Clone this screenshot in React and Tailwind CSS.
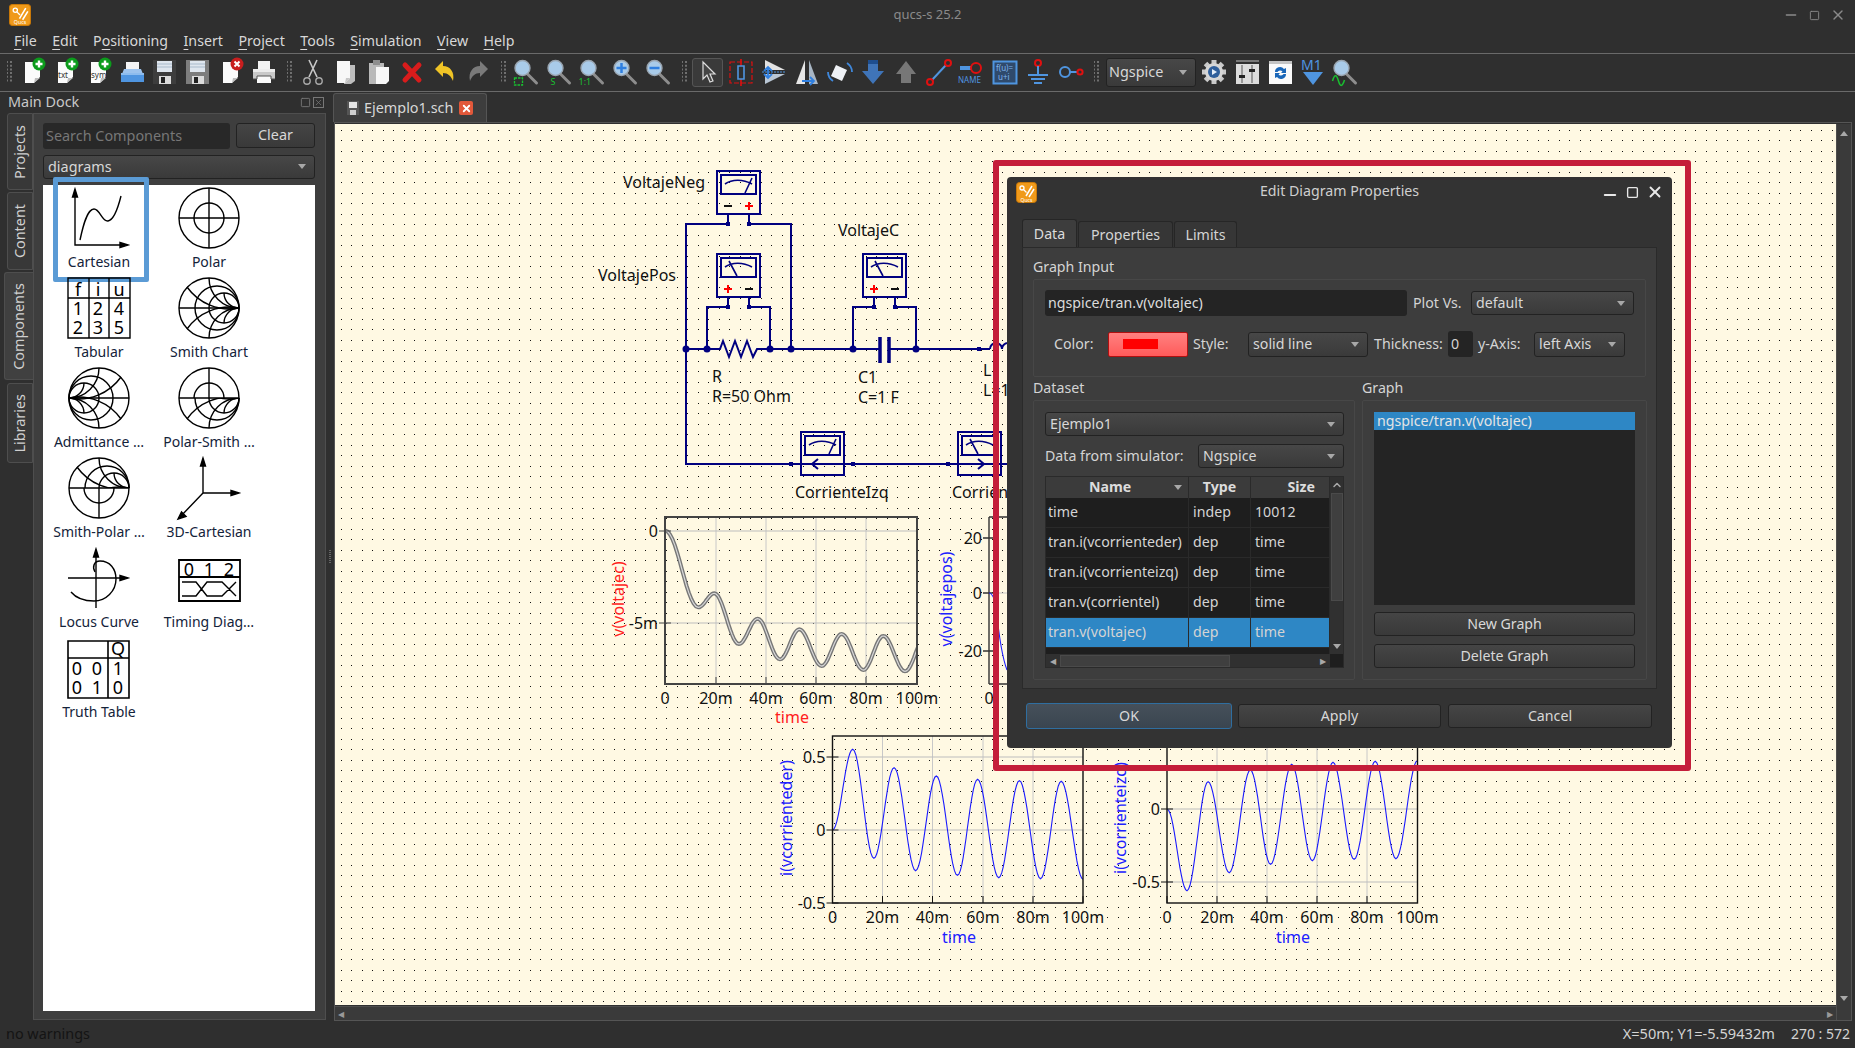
import React from 'react';
import { Minus, Square, X, ChevronUp } from 'lucide-react';

const ink = '#000080';
const sans = "'Noto Sans', 'Open Sans', sans-serif";

// smooth line through a list of peaks and troughs
const wave = (pts) => {
  let d = `M${pts[0][0]} ${pts[0][1]}`;
  for (let i = 1; i < pts.length; i++) {
    const [x0, y0] = pts[i - 1];
    const [x1, y1] = pts[i];
    for (let s = 1; s <= 14; s++) {
      const t = s / 14;
      const k = (1 - Math.cos(Math.PI * t)) / 2;
      d += `L${(x0 + (x1 - x0) * t).toFixed(1)} ${(y0 + (y1 - y0) * k).toFixed(1)}`;
    }
  }
  return d;
};

// canvas dots land on whole pixels, every 10.5px
let dotPath = '';
for (let i = 0; i < 144; i++) {
  for (let j = 0; j < 85; j++) {
    dotPath += `M${Math.floor(341 + i * 10.5)} ${Math.floor(130 + j * 10.5)}h1v1h-1z`;
  }
}

/* ---------- toolbar icons ---------- */
const Ico = ({ children }) => (
  <svg width="30" height="30" viewBox="0 0 30 30" overflow="visible">{children}</svg>
);

const Page = ({ x = 0 }) => (
  <g transform={`translate(${x} 0)`}>
    <path d="M7 5h15v15l-6 6H7z" fill="#fbfbfb" />
    <path d="M16 26l1-5h5z" fill="#bdbdbd" />
  </g>
);

const Badge = ({ red }) => (
  <g>
    <circle cx="21" cy="7" r="6.5" fill={red ? '#c81e1e' : '#0c9c1c'} />
    {red ? (
      <path d="M18.5 4.5l5 5m0-5l-5 5" stroke="#fff" strokeWidth="2" />
    ) : (
      <path d="M21 3.5v7M17.500 7h7" stroke="#fff" strokeWidth="2.4" />
    )}
  </g>
);

const NewIcon = ({ label }) => (
  <Ico>
    <Page />
    {label && (
      <text x="7" y="21" fontSize="8" fill="#333" fontFamily={sans}>{label}</text>
    )}
    <Badge />
  </Ico>
);

const CloseIcon = () => (
  <Ico>
    <Page />
    <Badge red />
  </Ico>
);

const OpenIcon = () => (
  <Ico>
    <path d="M9 5h13v10H9z" fill="#f4f4f4" />
    <path d="M7 12h17l2 5H5z" fill="#9cc3ee" />
    <path d="M4 16h23v9H4z" fill="#4f95e0" />
    <path d="M4 16h23v2H4z" fill="#8dbcee" />
  </Ico>
);

const SaveIcon = ({ light }) => (
  <Ico>
    <path d="M3 3h23v24H3z" fill={light ? '#7d7d7d' : '#3d3d3d'} />
    <path d="M7 4h15v11H7z" fill="#dfe6ee" />
    <path d="M7 7h15M7 10h15" stroke="#a9bacb" strokeWidth="1" />
    <path d="M9 19h12v8H9z" fill="#dcdcdc" />
    <path d="M11 20h4v6h-4z" fill="#222" />
  </Ico>
);

const PrintIcon = () => (
  <Ico>
    <path d="M9 4h12v8H9z" fill="#f2f2f2" />
    <path d="M4 12h22v10H4z" fill="#c9c9c9" />
    <path d="M4 12h22v3H4z" fill="#ececec" />
    <path d="M8 19h14v7H8z" fill="#fafafa" />
    <path d="M4 22h4v-3h14v3h4" fill="none" stroke="#555" strokeWidth="1" />
  </Ico>
);

const CutIcon = () => (
  <Ico>
    <path d="M11 3l8 17M19 3l-8 17" stroke="#c8c8c8" strokeWidth="1.6" />
    <circle cx="9" cy="24" r="3.2" fill="none" stroke="#aaa" strokeWidth="1.4" />
    <circle cx="21" cy="24" r="3.2" fill="none" stroke="#aaa" strokeWidth="1.4" />
  </Ico>
);

const CopyIcon = () => (
  <Ico>
    <path d="M13 8h11v16l-4 3h-7z" fill="#bdbdbd" />
    <path d="M6 4h13v17l-5 5H6z" fill="#f7f7f7" />
    <path d="M14 26l1-5h4z" fill="#c7c7c7" />
  </Ico>
);

const PasteIcon = () => (
  <Ico>
    <path d="M5 6h15v21H5z" fill="#b9b9b9" />
    <path d="M9 3h7v5H9z" fill="#8e8e8e" />
    <path d="M12 10h13v14l-3 3H12z" fill="#f7f7f7" />
  </Ico>
);

const DeleteIcon = () => (
  <Ico>
    <path d="M8 8l14 15M22 8L8 23" stroke="#d81c1c" strokeWidth="5" strokeLinecap="round" />
  </Ico>
);

const UndoIcon = ({ redo }) => (
  <Ico>
    <g transform={redo ? 'matrix(-1 0 0 1 30 0)' : undefined}>
      <path
        d="M5 12l8-8v5c7 0 12 6 10 15-2-5-5-8-10-8v4z"
        fill={redo ? '#7a7a7a' : '#f0c426'}
      />
    </g>
  </Ico>
);

const Lens = ({ children }) => (
  <Ico>
    <g transform="translate(-1.500 0)">
      <path d="M17 17l9 9" stroke="#8d8d8d" strokeWidth="3" strokeLinecap="round" />
      <circle cx="12" cy="11" r="7.5" fill="#a9cbe9" stroke="#9aa5b0" strokeWidth="1.4" />
      {children}
    </g>
  </Ico>
);

const SelectIcon = () => (
  <Ico>
    <path d="M10 5v17l4-4 3 7 3-1-3-7h5z" fill="#444" stroke="#ddd" strokeWidth="1.2" />
  </Ico>
);

const ActiveIcon = () => (
  <Ico>
    <path d="M4 5h22v21H4z" fill="none" stroke="#e01010" strokeWidth="1.2" strokeDasharray="5 2" />
    <path d="M15 2v7M15 22v7" stroke="#e01010" strokeWidth="1.6" />
    <path d="M12 9h6v13h-6z" fill="none" stroke="#4f95e0" strokeWidth="1.6" />
  </Ico>
);

const MirrorXIcon = () => (
  <Ico>
    <path d="M6 3l20 10H6z" fill="#e2e2e2" />
    <path d="M6 17h20L6 27z" fill="#b9c6d4" />
    <path d="M3 15h24" stroke="#4f95e0" strokeWidth="1" strokeDasharray="2 1" />
    <path d="M9 10v11M5 14l4-4 4 4M5 17l4 4 4-4" fill="none" stroke="#2f7fe0" strokeWidth="1.8" />
  </Ico>
);

const MirrorYIcon = () => (
  <Ico>
    <path d="M13 3v24H4z" fill="#e6e6e6" />
    <path d="M17 3v24h9z" fill="#a8b6c4" />
    <path d="M10 24h12" stroke="#2f7fe0" strokeWidth="2" />
    <path d="M18 20l4 4-4 4" fill="none" stroke="#2f7fe0" strokeWidth="1.8" />
  </Ico>
);

const RotateIcon = () => (
  <Ico>
    <path d="M11 8l11 5-5 11-11-5z" fill="#eef1f5" />
    <path d="M3 15c0 4 2 7 5 9M27 15c0-4-2-7-5-9" fill="none" stroke="#3f88dc" strokeWidth="1.8" />
  </Ico>
);

const BigArrow = ({ up }) => (
  <Ico>
    {up ? (
      <path d="M15 4l10 13h-5v9h-10v-9H5z" fill="#777" />
    ) : (
      <g>
        <path d="M10 3h10v11h6L15 27 4 14h6z" fill="#3f74b8" />
        <path d="M10 3h10v4H10z" fill="#1e4e8f" />
      </g>
    )}
  </Ico>
);

const WireIcon = () => (
  <Ico>
    <path d="M8 23L22 8" stroke="#4f95e0" strokeWidth="2" />
    <circle cx="6" cy="25" r="3" fill="none" stroke="#e01010" strokeWidth="2" />
    <circle cx="24" cy="6" r="3" fill="none" stroke="#e01010" strokeWidth="2" />
  </Ico>
);

const NameIcon = () => (
  <Ico>
    <path d="M3 9h12v4H3z" fill="#4f95e0" />
    <circle cx="19" cy="11" r="5" fill="none" stroke="#e01010" strokeWidth="2" />
    <text x="1" y="26" fontSize="8" fill="#4f95e0" fontFamily={sans}>NAME</text>
  </Ico>
);

const EqnIcon = () => (
  <Ico>
    <path d="M3.500 4.500h23v22h-23z" fill="#2f4a6c" stroke="#4f95e0" strokeWidth="2" />
    <text x="6" y="14" fontSize="8" fill="#7fb4ee" fontFamily={sans}>f(u)=</text>
    <text x="8" y="23" fontSize="8" fill="#7fb4ee" fontFamily={sans}>u+i</text>
  </Ico>
);

const GroundIcon = () => (
  <Ico>
    <circle cx="15" cy="6" r="3" fill="none" stroke="#e01010" strokeWidth="2" />
    <path d="M15 9v9M5 18h20M8 22h14M11 26h8" stroke="#4f95e0" strokeWidth="2" />
  </Ico>
);

const PortIcon = () => (
  <Ico>
    <circle cx="9" cy="15" r="5" fill="none" stroke="#4f95e0" strokeWidth="2" />
    <path d="M14 15h8" stroke="#4f95e0" strokeWidth="2" />
    <circle cx="24" cy="15" r="2.600" fill="none" stroke="#e01010" strokeWidth="2" />
  </Ico>
);

const GearIcon = () => (
  <Ico>
    <path d="M15 3v24M3 15h24M6.500 6.500l17 17M23.500 6.500l-17 17" stroke="#c9c9c9" strokeWidth="5" />
    <circle cx="15" cy="15" r="9" fill="#d6d6d6" />
    <circle cx="15" cy="15" r="6" fill="#2f5f9c" />
    <path d="M13 12l5 3-5 3z" fill="#e4eefa" />
  </Ico>
);

const SlidersIcon = () => (
  <Ico>
    <path d="M4 3h23v2H4z" fill="#777" />
    <path d="M4 7h23v20H4z" fill="#dcdcdc" />
    <path d="M10 8v18M20 8v18" stroke="#555" strokeWidth="1" />
    <path d="M7 18h6v3H7zM17 12h6v3h-6z" fill="#222" />
  </Ico>
);

const RefreshIcon = () => (
  <Ico>
    <path d="M4 4h23v23H4z" fill="#fafafa" />
    <path d="M4 4h23v3H4z" fill="#c4c4c4" />
    <path d="M10 15a5 5 0 0 1 9-3l2-1v5h-5l1.500-1.500a3 3 0 0 0-5 .5zM21 17a5 5 0 0 1-9 3l-2 1v-5h5l-1.500 1.500a3 3 0 0 0 5-.5z" fill="#1966b8" />
  </Ico>
);

const MarkerIcon = () => (
  <Ico>
    <text x="3" y="13" fontSize="14" fill="#4f95e0" fontFamily={sans}>M1</text>
    <path d="M5 15h20l-10 13z" fill="#4f95e0" />
  </Ico>
);

const SimZoomIcon = () => (
  <Lens>
    <path d="M3 24c2-7 4-7 6 0s4 5 6-1" fill="none" stroke="#19c030" strokeWidth="1.5" />
  </Lens>
);

const Grip = () => (
  <div className="w-[16px] flex justify-end pr-[3px]">
    <svg width="6" height="22" viewBox="0 0 6 22">
      <path d="M0 0v22M4 0v22" stroke="#707070" strokeWidth="2" strokeDasharray="2 1.700" />
    </svg>
  </div>
);

const ToolBtn = ({ children }) => (
  <div className="w-[33px] h-[30px] flex items-center justify-center shrink-0">{children}</div>
);

/* ---------- small widgets ---------- */
const Arrow = () => (
  <span className="w-0 h-0 border-l-[4px] border-r-[4px] border-t-[5px] border-l-transparent border-r-transparent border-t-[#a8a8a8]" />
);

const Combo = ({ value, className }) => (
  <div className={`flex items-center justify-between pl-[4px] pr-[8px] border border-[#222] rounded-[3px] bg-gradient-to-b from-[#474747] to-[#3a3a3a] text-[#d8d8d8] ${className}`}>
    <span>{value}</span>
    <Arrow />
  </div>
);

const Btn = ({ label, className }) => (
  <div className={`flex items-center justify-center border border-[#222] rounded-[3px] bg-gradient-to-b from-[#454545] to-[#393939] text-[#d8d8d8] ${className}`}>
    {label}
  </div>
);

const TabV = ({ label, className }) => (
  <div className={`flex items-center justify-center border border-[#4e4e4e] rounded-l-[3px] text-[#cfcfcf] ${className}`}>
    <span className="[writing-mode:vertical-rl] rotate-180">{label}</span>
  </div>
);

/* ---------- diagram icons of the dock ---------- */
const Dia = ({ children }) => (
  <svg width="66" height="66" viewBox="0 0 66 66" fill="none" stroke="#000" strokeWidth="1.4" overflow="visible">
    {children}
  </svg>
);

// constant resistance circles plus reactance arcs, all meeting at the right edge
const smithArcs = (
  <g>
    <path d="M63 33A30 30 0 0 1 33 3M63 33A30 30 0 0 0 33 63" />
    <path d="M63 33A52 52 0 0 1 11 12M63 33A52 52 0 0 0 11 54" />
    <circle cx="41" cy="33" r="22" />
    <circle cx="48" cy="33" r="15" />
    <path d="M63 33A15 15 0 0 1 48 18M63 33A15 15 0 0 0 48 48" />
  </g>
);

const Cartesian = () => (
  <Dia>
    <path d="M9 8v52h48" />
    <path d="M9 4l-2.500 8h5zM62 60l-8-2.500v5z" fill="#000" />
    <path d="M14 55c3-14 7-31 14-31 6 0 8 13 14 12 6-1 10-13 13-25" />
  </Dia>
);

const Polar = () => (
  <Dia>
    <circle cx="33" cy="33" r="30" />
    <circle cx="33" cy="33" r="15" />
    <path d="M3 33h60M33 3v60" />
  </Dia>
);

const Tabular = () => (
  <Dia>
    <path d="M2 3h62v60H2zM2 23h62M23 3v60M43 3v60" />
    <g fill="#000" stroke="none" fontSize="18" fontFamily={sans} textAnchor="middle">
      <text x="12" y="21">f</text><text x="32" y="21">i</text><text x="53" y="21">u</text>
      <text x="12" y="39.500">1</text><text x="32" y="39.500">2</text><text x="53" y="39.500">4</text>
      <text x="12" y="58.500">2</text><text x="32" y="58.500">3</text><text x="53" y="58.500">5</text>
    </g>
  </Dia>
);

const Smith = () => (
  <Dia>
    <circle cx="33" cy="33" r="30" />
    <path d="M3 33h60" />
    {smithArcs}
  </Dia>
);

const Admittance = () => (
  <Dia>
    <circle cx="33" cy="33" r="30" />
    <path d="M3 33h60" />
    <g transform="matrix(-1 0 0 1 66 0)">{smithArcs}</g>
  </Dia>
);

const halfTop = 'M0 0h66v33H0z';
const halfBottom = 'M0 33h66v33H0z';

const PolarSmith = () => (
  <Dia>
    <defs>
      <clipPath id="ps1"><path d={halfTop} /></clipPath>
      <clipPath id="ps2"><path d={halfBottom} /></clipPath>
    </defs>
    <circle cx="33" cy="33" r="30" />
    <path d="M3 33h60" />
    <g clipPath="url(#ps1)"><circle cx="33" cy="33" r="15" /><path d="M33 3v30" /></g>
    <g clipPath="url(#ps2)">{smithArcs}</g>
  </Dia>
);

const SmithPolar = () => (
  <Dia>
    <defs>
      <clipPath id="sp1"><path d={halfTop} /></clipPath>
      <clipPath id="sp2"><path d={halfBottom} /></clipPath>
    </defs>
    <circle cx="33" cy="33" r="30" />
    <path d="M3 33h60" />
    <g clipPath="url(#sp1)">{smithArcs}</g>
    <g clipPath="url(#sp2)"><circle cx="33" cy="33" r="15" /><path d="M33 33v30" /></g>
  </Dia>
);

const Cart3D = () => (
  <Dia>
    <path d="M27 38V7M27 38h32M27 38L5 61" />
    <path d="M27 3l-2.500 8h5zM63 38l-8-2.500v5zM2 64l8-2.500-4.500-4.500z" fill="#000" />
  </Dia>
);

const Locus = () => (
  <Dia>
    <path d="M2 33h56M30 8v55" />
    <path d="M30 4l-2.500 8h5zM62 33l-8-2.500v5z" fill="#000" />
    <path d="M29 27C26 22 28 16 34 16C44 16 50 24 50 34C50 46 40 56 28 56C18 56 10 53 5 47" />
  </Dia>
);

const Timing = () => (
  <Dia>
    <path d="M3 15h61v41H3zM3 32h61" strokeWidth="1.800" />
    <path d="M6 37H20L31 51H46L60 37M6 51H20L31 37H46L60 51" />
    <g fill="#000" stroke="none" fontSize="18" fontFamily={sans} textAnchor="middle">
      <text x="13" y="31">0</text><text x="33" y="31">1</text><text x="53" y="31">2</text>
    </g>
  </Dia>
);

const Truth = () => (
  <Dia>
    <path d="M2 6h61v57H2zM2 23h61M42 6v57" strokeWidth="1.600" />
    <g fill="#000" stroke="none" fontSize="18" fontFamily={sans} textAnchor="middle">
      <text x="52" y="20">Q</text>
      <text x="11" y="39.500">0</text><text x="31" y="39.500">0</text><text x="52" y="39.500">1</text>
      <text x="11" y="58.500">0</text><text x="31" y="58.500">1</text><text x="52" y="58.500">0</text>
    </g>
  </Dia>
);

const diagrams = [
  ['Cartesian', Cartesian],
  ['Polar', Polar],
  ['Tabular', Tabular],
  ['Smith Chart', Smith],
  ['Admittance …', Admittance],
  ['Polar-Smith …', PolarSmith],
  ['Smith-Polar …', SmithPolar],
  ['3D-Cartesian', Cart3D],
  ['Locus Curve', Locus],
  ['Timing Diag…', Timing],
  ['Truth Table', Truth],
];

/* ---------- schematic ---------- */
const Meter = ({ x, y, flip }) => (
  <g stroke={ink} fill="none">
    <rect x={x} y={y} width="43" height="43" strokeWidth="2" />
    <rect x={x + 4} y={y + 4} width="35" height="19" strokeWidth="2" />
    {flip ? (
      <path d={`M${x + 8} ${y + 13}c7-5 18-5 27 0M${x + 28} ${y + 22}l7-15`} strokeWidth="1.6" />
    ) : (
      <path d={`M${x + 8} ${y + 13}c7-5 18-5 27 0M${x + 20} ${y + 22}l-8-15`} strokeWidth="1.6" />
    )}
  </g>
);

const Pm = ({ x, y, plus }) => (
  <path
    d={plus ? `M${x - 4} ${y}h8M${x} ${y - 4}v8` : `M${x - 4} ${y}h8`}
    stroke={plus ? '#ff0000' : '#111'}
    strokeWidth="2"
  />
);

const Node = ({ x, y }) => <circle cx={x} cy={y} r="3.500" fill={ink} />;
const Port = ({ x, y }) => <rect x={x - 2} y={y - 2} width="4" height="4" fill={ink} />;

const Txt = ({ x, y, children, fill = '#111', anchor = 'start', rotate }) => (
  <text
    x={x}
    y={y}
    fill={fill}
    fontSize="16"
    fontFamily={sans}
    textAnchor={anchor}
    dominantBaseline="central"
    transform={rotate ? `rotate(-90 ${x} ${y})` : undefined}
  >
    {children}
  </text>
);

const Chart = ({ id, l, r, t, b, xs, ys, line, lineProps, frame = '#111', frameW = 1.400, yLabel, yLabelX, yLabelY, labelColor, xTitleX, xTitleY }) => {
  const names = ['0', '20m', '40m', '60m', '80m', '100m'];
  const ticks = [l, ...xs, r];
  return (
    <g>
      <defs>
        <clipPath id={id}><rect x={l} y={t} width={r - l} height={b - t} /></clipPath>
      </defs>
      {xs.map((x) => <path key={x} d={`M${x} ${t}V${b}`} stroke="#c8c8c8" strokeWidth="1" />)}
      {ys.map((y) => <path key={y[0]} d={`M${l} ${y[0]}H${r}`} stroke="#bdbdbd" strokeWidth="1" />)}
      <g clipPath={`url(#${id})`}>
        {lineProps.map((p, i) => <path key={i} d={line} fill="none" {...p} />)}
      </g>
      <rect x={l} y={t} width={r - l} height={b - t} fill="none" stroke={frame} strokeWidth={frameW} />
      {ticks.map((x) => <path key={x} d={`M${x} ${b - 7}V${b}`} stroke={frame} strokeWidth="1" />)}
      {ys.map((y) => <path key={y[0]} d={`M${l - 6} ${y[0]}h12`} stroke={frame} strokeWidth="1" />)}
      {ys.map((y) => <Txt key={y[0]} x={l - 7} y={y[0]} anchor="end">{y[1]}</Txt>)}
      {ticks.map((x, i) => <Txt key={x} x={x} y={b + 14} anchor="middle">{names[i]}</Txt>)}
      <Txt x={xTitleX} y={xTitleY} fill={labelColor} anchor="middle">time</Txt>
      <Txt x={yLabelX} y={yLabelY} fill={labelColor} anchor="middle" rotate>{yLabel}</Txt>
    </g>
  );
};

// peaks and troughs read off the screenshot
const z6 = (pts) => pts.map(([x, y]) => [590 + x / 3, 500 + y / 3]);
const z9 = (pts) => pts.map(([x, y]) => [760 + x / 2.178, 730 + y / 3]);

const lineV = wave(z6([[226, 92], [325, 322], [373, 280], [447, 432], [503, 356], [570, 478], [628, 388], [695, 498], [755, 402], [820, 510], [880, 408], [945, 514], [1007, 410]]));
const lineR = wave(z9([[158, 300], [202, 58], [248, 385], [292, 113], [339, 422], [384, 138], [430, 436], [474, 148], [520, 443], [565, 152], [611, 446], [656, 154], [704, 448]]));
const lineL = wave(z9([[887, 238], [930, 482], [976, 155], [1022, 428], [1068, 120], [1112, 403], [1158, 103], [1203, 392], [1248, 97], [1294, 388], [1340, 94], [1385, 386], [1432, 92]]));

const Schematic = () => (
  <svg className="absolute inset-0 w-full h-full" viewBox="335 124 1501 881">
    <path d={dotPath} fill="#111" shapeRendering="crispEdges" />

    {/* wires */}
    <g fill="none" stroke={ink} strokeWidth="2">
      <path d="M728 213v11H686V464H790M749 213v11h42V349" />
      <path d="M728 297v10H707V349M749 297v10h21V349" />
      <path d="M874 297v10H853V349M895 297v10h21V349" />
      <path d="M686 349H720l3-8 6 16 6-16 6 16 6-16 6 16 4-8H880M889 349H990" />
      <path d="M990 349a6 6 0 0 1 12 0a6 6 0 0 1 12 0" />
      <path d="M790 464H1010" />
      <path d="M880 337v26M889 337v26" strokeWidth="3.500" />
      <path d="M818 459l-6 5 6 5M978 459l6 5-6 5" />
    </g>
    {[[686, 349], [707, 349], [770, 349], [791, 349], [853, 349], [916, 349]].map(([x, y]) => <Node key={x} x={x} y={y} />)}
    {[[728, 224], [749, 224], [728, 307], [749, 307], [874, 307], [895, 307], [979, 349], [791, 464], [853, 464], [948, 464]].map(([x, y]) => <Port key={`${x}${y}`} x={x} y={y} />)}

    <Meter x={717} y={171} flip />
    <Pm x={728} y={206} />
    <Pm x={749} y={206} plus />
    <Meter x={717} y={254} />
    <Pm x={728} y={289} plus />
    <Pm x={749} y={289} />
    <Meter x={863} y={254} />
    <Pm x={874} y={289} plus />
    <Pm x={895} y={289} />
    <Meter x={801} y={432} flip />
    <Meter x={958} y={432} />

    <Txt x={623} y={182}>VoltajeNeg</Txt>
    <Txt x={598} y={275}>VoltajePos</Txt>
    <Txt x={838} y={230}>VoltajeC</Txt>
    <Txt x={712} y={376}>R</Txt>
    <Txt x={712} y={396}>R=50 Ohm</Txt>
    <Txt x={858} y={377}>C1</Txt>
    <Txt x={858} y={397}>C=1 F</Txt>
    <Txt x={983} y={370}>L</Txt>
    <Txt x={983} y={390}>L=1 H</Txt>
    <Txt x={795} y={492}>CorrienteIzq</Txt>
    <Txt x={952} y={492}>CorrienteDer</Txt>

    <Chart
      id="c1" l={665} r={917} t={517} b={684}
      xs={[716, 766, 816, 866]} ys={[[531, '0'], [623, '-5m']]}
      line={lineV}
      lineProps={[{ stroke: '#777', strokeWidth: 4 }, { stroke: '#d8d8d8', strokeWidth: 1.200 }]}
      frame="#444" frameW={2}
      yLabel="v(voltajec)" yLabelX={618} yLabelY={599} labelColor="#ff2020"
      xTitleX={792} xTitleY={717}
    />

    {/* second plot sits almost fully under the dialog */}
    <path d="M989 517H1020M989 684H1020M989 517V684M983 538h12M983 593h12M983 651h12" fill="none" stroke="#333" strokeWidth="1.400" />
    <path d="M995 593H1020" stroke="#c8c8c8" />
    <path d="M989 593c3 0 5 3 7 14 2 20 6 50 11 63" fill="none" stroke="#2020ff" strokeWidth="1.100" />
    <Txt x={982} y={538} anchor="end">20</Txt>
    <Txt x={982} y={593} anchor="end">0</Txt>
    <Txt x={982} y={651} anchor="end">-20</Txt>
    <Txt x={989} y={698} anchor="middle">0</Txt>
    <Txt x={946} y={599} fill="#2020ff" anchor="middle" rotate>v(voltajepos)</Txt>

    <Chart
      id="c3" l={832.500} r={1083} t={736} b={903}
      xs={[882.500, 932.500, 983, 1033]} ys={[[757, '0.5'], [830, '0'], [903, '-0.5']]}
      line={lineR}
      lineProps={[{ stroke: '#1a1aff', strokeWidth: 1.100 }]}
      yLabel="i(vcorrienteder)" yLabelX={786} yLabelY={818} labelColor="#2020ff"
      xTitleX={959} xTitleY={937}
    />
    <Chart
      id="c4" l={1167} r={1417.500} t={736} b={903}
      xs={[1217, 1267, 1317, 1367]} ys={[[809, '0'], [882, '-0.5']]}
      line={lineL}
      lineProps={[{ stroke: '#1a1aff', strokeWidth: 1.100 }]}
      yLabel="i(vcorrienteizq)" yLabelX={1120} yLabelY={818} labelColor="#2020ff"
      xTitleX={1293} xTitleY={937}
    />
  </svg>
);

/* ---------- dialog ---------- */
const rows = [
  ['time', 'indep', '10012'],
  ['tran.i(vcorrienteder)', 'dep', 'time'],
  ['tran.i(vcorrienteizq)', 'dep', 'time'],
  ['tran.v(corrientel)', 'dep', 'time'],
  ['tran.v(voltajec)', 'dep', 'time'],
];

const Dialog = () => (
  <div className="absolute left-[1007px] top-[177px] w-[665px] h-[571px] rounded-[4px] bg-[#333333] text-[14.200px] text-[#d4d4d4] flex flex-col">
    {/* title */}
    <div className="relative h-[42px] shrink-0">
      <div className="absolute left-[9px] top-[5px]"><AppLogo size={21} /></div>
      <div className="text-center pt-[3px] text-[#cfcfcf]">Edit Diagram Properties</div>
      <div className="absolute right-[8px] top-[6px] flex items-center gap-[5px] text-[#e8e8e8]">
        <Minus size={18} strokeWidth={2.500} className="translate-y-[3px]" />
        <Square size={13} strokeWidth={2.500} className="mx-[2px]" />
        <X size={18} strokeWidth={2.500} />
      </div>
    </div>

    {/* tabs */}
    <div className="flex pl-[15px] h-[28px] shrink-0 items-end">
      <div className="w-[55px] h-[28px] flex items-center justify-center bg-[#3d3d3d] border border-b-0 border-[#262626] rounded-t-[3px] text-[#dcdcdc]">Data</div>
      <div className="w-[95px] h-[26px] flex items-center justify-center bg-[#363636] border border-b-0 border-[#262626] rounded-t-[3px] ml-px">Properties</div>
      <div className="w-[63px] h-[26px] flex items-center justify-center bg-[#363636] border border-b-0 border-[#262626] rounded-t-[3px] ml-px">Limits</div>
    </div>

    {/* pane */}
    <div className="ml-[15px] w-[635px] h-[442px] shrink-0 bg-[#3d3d3d] border border-[#2a2a2a] px-[10px] pt-[10px]">
      <div className="h-[21px] leading-[18px]">Graph Input</div>
      <div className="h-[98px] border border-[#474747] rounded-[2px] pt-[10px]">
        <div className="flex items-center pl-[11px] h-[26px]">
          <div className="w-[362px] h-[26px] pl-[3px] flex items-center bg-[#242424] rounded-[3px] text-[#dcdcdc]">ngspice/tran.v(voltajec)</div>
          <span className="w-[64px] pl-[6px]">Plot Vs.</span>
          <Combo value="default" className="w-[163px] h-[24px]" />
        </div>
        <div className="flex items-center pl-[20px] h-[26px] mt-[15px]">
          <span className="w-[54px]">Color:</span>
          <div className="w-[80px] h-[25px] flex items-center pl-[14px] rounded-[2px] border border-[#b01010] bg-gradient-to-b from-[#ff8080] to-[#ff5a5a]">
            <div className="w-[35px] h-[10px] bg-[#ff0000]" />
          </div>
          <span className="w-[60px] pl-[5px]">Style:</span>
          <Combo value="solid line" className="w-[120px] h-[25px]" />
          <span className="w-[80px] pl-[6px] whitespace-nowrap">Thickness:</span>
          <div className="w-[25px] h-[26px] pl-[3px] flex items-center bg-[#242424] rounded-[3px]">0</div>
          <span className="w-[61px] pl-[5px]">y-Axis:</span>
          <Combo value="left Axis" className="w-[91px] h-[25px]" />
        </div>
      </div>

      <div className="flex gap-[7px]">
        <div className="w-[322px]">
          <div className="h-[23px] pt-[2px] leading-[18px]">Dataset</div>
          <div className="h-[280px] border border-[#474747] rounded-[2px] pt-[11px] px-[11px]">
            <Combo value="Ejemplo1" className="w-[299px] h-[24px]" />
            <div className="flex items-center justify-between mt-[8px] h-[24px] w-[299px]">
              <span>Data from simulator:</span>
              <Combo value="Ngspice" className="w-[146px] h-[24px]" />
            </div>
            {/* file table */}
            <div className="relative w-[299px] h-[192px] mt-[8px] border border-[#2a2a2a] bg-[#1e1e1e]">
              <div className="flex h-[21px] bg-[#3b3b3b] font-bold text-[#dcdcdc]">
                <div className="relative w-[143px] border-r border-[#2a2a2a] pl-[43px] leading-[19px]">
                  Name
                  <span className="absolute right-[6px] top-[8px] flex"><Arrow /></span>
                </div>
                <div className="w-[62px] border-r border-[#2a2a2a] text-center leading-[19px]">Type</div>
                <div className="w-[79px] text-right pr-[15px] leading-[19px]">Size</div>
              </div>
              {rows.map((r, i) => (
                <div key={r[0]} className={`flex h-[30px] items-center w-[284px] border-b border-[#2a2a2a] ${i === 4 ? 'bg-[#2e87c5]' : ''}`}>
                  <div className="w-[143px] h-full flex items-center pl-[2px] pb-[2px] border-r border-[#2a2a2a] whitespace-nowrap overflow-hidden">{r[0]}</div>
                  <div className="w-[62px] h-full flex items-center pl-[4px] pb-[2px] border-r border-[#2a2a2a]">{r[1]}</div>
                  <div className="flex-1 pl-[4px] pb-[2px]">{r[2]}</div>
                </div>
              ))}
              {/* scrollbars */}
              <div className="absolute right-0 top-0 w-[14px] h-[177px] bg-[#303030] border-l border-[#2a2a2a] flex flex-col items-center">
                <div className="h-[16px] flex items-center text-[#a8a8a8]"><ChevronUp size={12} strokeWidth={3} /></div>
                <div className="w-[12px] h-[108px] bg-[#3f3f3f] border border-[#4a4a4a]" />
                <div className="mt-auto h-[16px] flex items-center"><Arrow /></div>
              </div>
              <div className="absolute left-0 bottom-0 w-[284px] h-[13px] bg-[#303030] flex items-center">
                <div className="w-[14px] flex justify-center text-[#a8a8a8] text-[8px] leading-none">◀</div>
                <div className="w-[170px] h-[12px] bg-[#3f3f3f] border border-[#4a4a4a]" />
                <div className="ml-auto w-[14px] flex justify-center text-[#a8a8a8] text-[8px] leading-none">▶</div>
              </div>
            </div>
          </div>
        </div>

        <div className="w-[285px]">
          <div className="h-[23px] pt-[2px] leading-[18px]">Graph</div>
          <div className="h-[280px] border border-[#474747] rounded-[2px] pt-[11px] px-[11px]">
            <div className="w-[261px] h-[193px] bg-[#242424]">
              <div className="h-[18px] pl-[3px] flex items-center bg-[#2e87c5] text-[#e4e4e4]">ngspice/tran.v(voltajec)</div>
            </div>
            <Btn label="New Graph" className="w-[261px] h-[24px] mt-[7px]" />
            <Btn label="Delete Graph" className="w-[261px] h-[24px] mt-[8px]" />
          </div>
        </div>
      </div>
    </div>

    {/* footer */}
    <div className="flex items-center pl-[19px] mt-[14px] gap-[6px]">
      <Btn label="OK" className="w-[206px] h-[26px] !border-[#2f6ea0] !from-[#46505a] !to-[#3a4550]" />
      <Btn label="Apply" className="w-[203px] h-[24px]" />
      <Btn label="Cancel" className="w-[204px] h-[24px] ml-px" />
    </div>
  </div>
);

const AppLogo = ({ size }) => (
  <svg width={size} height={size} viewBox="0 0 21 21">
    <rect x="0.500" y="0.500" width="20" height="20" rx="3" fill="#f09a1a" stroke="#c87808" />
    <path d="M10 14l6-10M13 15l5-8" stroke="#fff" strokeWidth="1.500" />
    <circle cx="6" cy="6" r="2" fill="none" stroke="#fff" strokeWidth="1.300" />
    <path d="M7.500 7.500l3 3" stroke="#fff" strokeWidth="1.300" />
    <text x="10.500" y="19.500" fontSize="5" fill="#fff" textAnchor="middle" fontFamily={sans}>Qucs</text>
  </svg>
);

const menus = [
  ['', 'F', 'ile'],
  ['', 'E', 'dit'],
  ['P', 'o', 'sitioning'],
  ['', 'I', 'nsert'],
  ['', 'P', 'roject'],
  ['', 'T', 'ools'],
  ['', 'S', 'imulation'],
  ['', 'V', 'iew'],
  ['', 'H', 'elp'],
];

export default function App() {
  return (
    <div className="relative w-[1855px] h-[1048px] overflow-hidden flex flex-col bg-[#2f2f2f] text-[#d8d8d8] text-[14.400px] font-['Noto_Sans',sans-serif]">
      {/* window title */}
      <div className="relative h-[30px] shrink-0 flex items-center justify-center">
        <div className="absolute left-[9px] top-[4px]"><AppLogo size={22} /></div>
        <span className="text-[#8a8a8a] text-[13px]">qucs-s 25.2</span>
        <div className="absolute right-[9px] top-[7px] flex items-center gap-[9px] text-[#8a8a8a]">
          <Minus size={16} />
          <Square size={11} className="mx-[1px]" />
          <X size={16} />
        </div>
      </div>

      {/* menu */}
      <div className="h-[24px] shrink-0 flex items-center pl-[14px] pb-[2px] gap-[15.500px] border-b border-[#6a6a6a] text-[14.200px]">
        {menus.map(([a, b, c]) => (
          <span key={b + c}>{a}<span className="underline underline-offset-[3px]">{b}</span>{c}</span>
        ))}
      </div>

      {/* toolbar */}
      <div className="h-[38px] shrink-0 flex items-center pb-px border-b border-[#6a6a6a]">
        <Grip />
        <ToolBtn><NewIcon /></ToolBtn>
        <ToolBtn><NewIcon label="txt" /></ToolBtn>
        <ToolBtn><NewIcon label="sym" /></ToolBtn>
        <ToolBtn><OpenIcon /></ToolBtn>
        <ToolBtn><SaveIcon /></ToolBtn>
        <ToolBtn><SaveIcon light /></ToolBtn>
        <ToolBtn><CloseIcon /></ToolBtn>
        <ToolBtn><PrintIcon /></ToolBtn>
        <Grip />
        <ToolBtn><CutIcon /></ToolBtn>
        <ToolBtn><CopyIcon /></ToolBtn>
        <ToolBtn><PasteIcon /></ToolBtn>
        <ToolBtn><DeleteIcon /></ToolBtn>
        <ToolBtn><UndoIcon /></ToolBtn>
        <ToolBtn><UndoIcon redo /></ToolBtn>
        <Grip />
        <ToolBtn><Lens><path d="M4 21h8v7H4z" fill="none" stroke="#19c030" strokeWidth="1.300" strokeDasharray="2.500 1" /></Lens></ToolBtn>
        <ToolBtn><Lens><text x="7" y="28" fontSize="9" fill="#19c030" fontFamily={sans}>S</text></Lens></ToolBtn>
        <ToolBtn><Lens><text x="2" y="28" fontSize="9" fill="#19c030" fontFamily={sans}>1:1</text></Lens></ToolBtn>
        <ToolBtn><Lens><path d="M12 6v10M7 11h10" stroke="#2f7fe0" strokeWidth="2.500" /></Lens></ToolBtn>
        <ToolBtn><Lens><path d="M7 11h10" stroke="#2f7fe0" strokeWidth="2.500" /></Lens></ToolBtn>
        <Grip />
        <ToolBtn><div className="w-[31px] h-[29px] flex items-center justify-center border border-[#555] rounded-[3px] bg-[#3a3a3a]"><SelectIcon /></div></ToolBtn>
        <ToolBtn><ActiveIcon /></ToolBtn>
        <ToolBtn><MirrorXIcon /></ToolBtn>
        <ToolBtn><MirrorYIcon /></ToolBtn>
        <ToolBtn><RotateIcon /></ToolBtn>
        <ToolBtn><BigArrow /></ToolBtn>
        <ToolBtn><BigArrow up /></ToolBtn>
        <ToolBtn><WireIcon /></ToolBtn>
        <ToolBtn><NameIcon /></ToolBtn>
        <ToolBtn><EqnIcon /></ToolBtn>
        <ToolBtn><GroundIcon /></ToolBtn>
        <ToolBtn><PortIcon /></ToolBtn>
        <Grip />
        <Combo value="Ngspice" className="w-[90px] h-[29px] ml-[3px] mr-[1px] !pl-[2px]" />
        <ToolBtn><GearIcon /></ToolBtn>
        <ToolBtn><SlidersIcon /></ToolBtn>
        <ToolBtn><RefreshIcon /></ToolBtn>
        <ToolBtn><MarkerIcon /></ToolBtn>
        <ToolBtn><SimZoomIcon /></ToolBtn>
      </div>

      {/* work area */}
      <div className="flex-1 flex min-h-0">
        {/* main dock */}
        <div className="w-[326px] shrink-0 flex flex-col">
          <div className="relative h-[21px] shrink-0 pl-[8px] leading-[19px] text-[#c8c8c8]">
            Main Dock
            <div className="absolute right-[2px] top-[5px] flex gap-[2px] text-[#777]">
              <Square size={11} />
              <X size={11} className="border border-[#777]" />
            </div>
          </div>
          <div className="flex-1 flex min-h-0">
            <div className="w-[33px] shrink-0 flex flex-col items-end">
              <TabV label="Projects" className="w-[26px] h-[77px] bg-[#383838]" />
              <TabV label="Content" className="w-[26px] h-[78px] mt-[2px] bg-[#383838]" />
              <TabV label="Components" className="w-[29px] h-[108px] mt-[2px] bg-[#404040] !border-r-0" />
              <TabV label="Libraries" className="w-[26px] h-[80px] mt-[3px] bg-[#383838]" />
            </div>
            <div className="flex-1 bg-[#3e3e3e] border border-[#4e4e4e] pt-[9px] px-[9px] mb-[2px] flex flex-col">
              <div className="flex gap-[6px] shrink-0">
                <div className="w-[187px] h-[26px] pl-[3px] pb-[1px] flex items-center bg-[#282828] rounded-[3px] text-[#777]">Search Components</div>
                <Btn label="Clear" className="w-[79px] h-[25px] pb-[1px]" />
              </div>
              <Combo value="diagrams" className="w-[272px] h-[24px] mt-[6px] shrink-0 pb-[1px]" />
              <div className="mt-[6px] mb-[8px] flex-1 w-[272px] bg-white pl-px">
                <div className="grid grid-cols-[110px_110px] auto-rows-[90px]">
                  {diagrams.map(([name, Icon], i) => (
                    <div key={name} className="relative flex flex-col items-center">
                      <Icon />
                      <span className="mt-px text-[14px] leading-[20px] text-[#14233a] whitespace-nowrap">{name}</span>
                      {i === 0 && (
                        <div className="absolute left-[9px] top-[-8px] w-[96px] h-[105px] border-[5px] border-[#5b9bd5] rounded-[2px]" />
                      )}
                    </div>
                  ))}
                </div>
              </div>
            </div>
          </div>
        </div>

        {/* splitter */}
        <div className="w-[7px] shrink-0 flex items-center justify-center">
          <svg width="2" height="14" viewBox="0 0 2 14"><path d="M1 0v14" stroke="#666" strokeWidth="2" strokeDasharray="1 1" /></svg>
        </div>

        {/* document area */}
        <div className="flex-1 flex flex-col min-w-0 pr-[3px]">
          <div className="h-[29px] mt-[1px] shrink-0 flex">
            <div className="w-[154px] flex items-center pl-[13px] bg-[#3d3d3d] border border-b-0 border-[#555] rounded-t-[3px]">
              <svg width="12" height="14" viewBox="0 0 12 14">
                <path d="M0 0h12v14H0z" fill="#555" />
                <path d="M2 1h8v6H2z" fill="#e4e4e4" />
                <path d="M3 9h6v5H3z" fill="#cfcfcf" />
              </svg>
              <span className="ml-[5px]">Ejemplo1.sch</span>
              <span className="ml-auto mr-[13px] w-[14px] h-[14px] flex items-center justify-center rounded-[2px] bg-[#e2583a] text-white">
                <X size={11} strokeWidth={4} />
              </span>
            </div>
          </div>
          <div className="flex-1 min-h-0 flex border border-[#555] ml-[1px] pt-px mb-px">
            <div className="flex-1 flex flex-col min-w-0">
              <div className="relative flex-1 min-h-0 bg-[#fff9e3] overflow-hidden">
                <Schematic />
              </div>
              <div className="h-[14px] mt-[1px] shrink-0 bg-[#3a3a3a] border-t border-[#4e4e4e] flex items-center justify-between px-[3px] text-[8px] text-[#999]">
                <span>◀</span>
                <span>▶</span>
              </div>
            </div>
            <div className="w-[15px] shrink-0 bg-[#3a3a3a] border-l border-[#4e4e4e] flex flex-col items-center justify-between pt-[7px] pb-[19px]">
              <span className="rotate-180 flex"><Arrow /></span>
              <Arrow />
            </div>
          </div>
        </div>
      </div>

      {/* status */}
      <div className="relative h-[26px] shrink-0 flex items-center justify-between pl-[6px] pr-[5px] pb-[2px]">
        <span className="text-[#141414]">no warnings</span>
        <div className="flex gap-[16px] text-[#d4d4d4]">
          <span className="text-[14.600px]">X=50m; Y1=-5.59432m</span>
          <span className="text-[14px]">270 : 572</span>
        </div>
      </div>

      {/* annotation frame round the dialog, then the dialog on top */}
      <div className="absolute left-[993px] top-[160px] w-[698px] h-[611px] border-[6px] border-[#c41e3a] rounded-[3px]" />
      <Dialog />
    </div>
  );
}
